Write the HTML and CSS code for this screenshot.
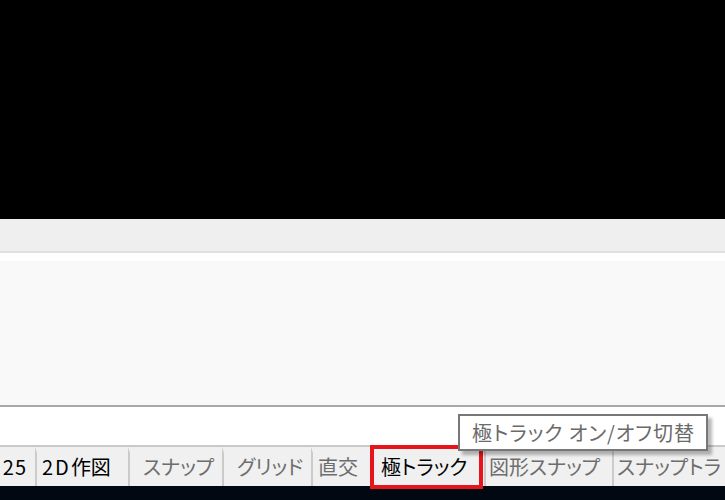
FILE: index.html
```html
<!DOCTYPE html>
<html lang="ja">
<head>
  <meta charset="UTF-8" />
  <title>Status bar</title>
  <link rel="stylesheet" href="styles.css">
</head>
<body>
  <div class="viewport"></div>
  <div class="toolbar"></div>
  <div class="history"></div>
  <div class="command"></div>
  <div class="statusbar">
    <div class="item on w-coord">25</div>
    <div class="item on w-2d"><span class="latin">2D</span>作図</div>
    <div class="item w-snap">スナップ</div>
    <div class="item w-grid">グリッド</div>
    <div class="item w-ortho">直交</div>
    <div class="item on w-polar marked">極トラック</div>
    <div class="item w-osnap">図形スナップ</div>
    <div class="item w-otrack">スナップトラ</div>
    <div class="tooltip">極トラック オン/オフ切替</div>
  </div>
  <div class="taskbar"></div>
</body>
</html>
```

FILE: styles.css
```css
* { box-sizing: border-box; margin: 0; padding: 0; }
*::after { box-sizing: border-box; }
html, body { height: 100%; overflow: hidden; }
body {
  background: #000;
  font-family: "Noto Sans CJK JP", "Noto Sans", sans-serif;
  font-feature-settings: "palt";
}
.viewport { height: 219px; background: #000; }
.toolbar {
  height: 34px;
  background: #efefef;
  border-bottom: 2px solid #e0e0e0;
}
.history {
  height: 154px;
  background: #f9f9f9;
  border-top: 8px solid #fff;
  border-bottom: 2px solid #a8a8a8;
}
.command { height: 38px; background: #fff; }
.statusbar {
  position: relative;
  display: flex;
  height: 41px;
  background: #f0f0f0;
  border-top: 2px solid #c9c9c9;
  white-space: nowrap;
}
.item {
  position: relative;
  display: flex;
  align-items: center;
  flex-shrink: 0;
  height: 100%;
  font-size: 20px;
  color: #6d6d6d;
  border-left: 2px solid #cbcbcb;
  border-top: 6px solid #f0f0f0;
  padding-bottom: 6px;
  overflow: hidden;
}
.item.on { color: #000; }
.latin { letter-spacing: 2px; }
.w-coord { width: 35px; border-left: none; justify-content: flex-end; padding-right: 8px; letter-spacing: 1px; }
.w-2d { width: 93px; padding-left: 5px; }
.w-snap { width: 94px; padding-left: 13px; }
.w-grid { width: 89px; padding-left: 13px; }
.w-ortho { width: 60px; padding-left: 5px; }
.w-polar { width: 113px; padding-left: 10px; border-left: none; overflow: visible; }
.w-osnap { width: 128px; padding-left: 3px; }
.w-otrack { flex: 1; padding-left: 3px; }
.marked::after {
  content: "";
  position: absolute;
  left: -1px;
  top: -8px;
  width: 113px;
  height: 44px;
  border: 4px solid #e8141c;
}
.tooltip {
  position: absolute;
  left: 458px;
  top: -33px;
  width: 250px;
  height: 37px;
  padding-left: 12px;
  display: flex;
  align-items: center;
  background: #fff;
  border: 2px solid #777;
  box-shadow: 4px 4px 3px rgba(0,0,0,0.28);
  font-size: 20px;
  letter-spacing: 1px;
  color: #6a6a6a;
}
.taskbar { height: 20px; background: #020812; }
```
